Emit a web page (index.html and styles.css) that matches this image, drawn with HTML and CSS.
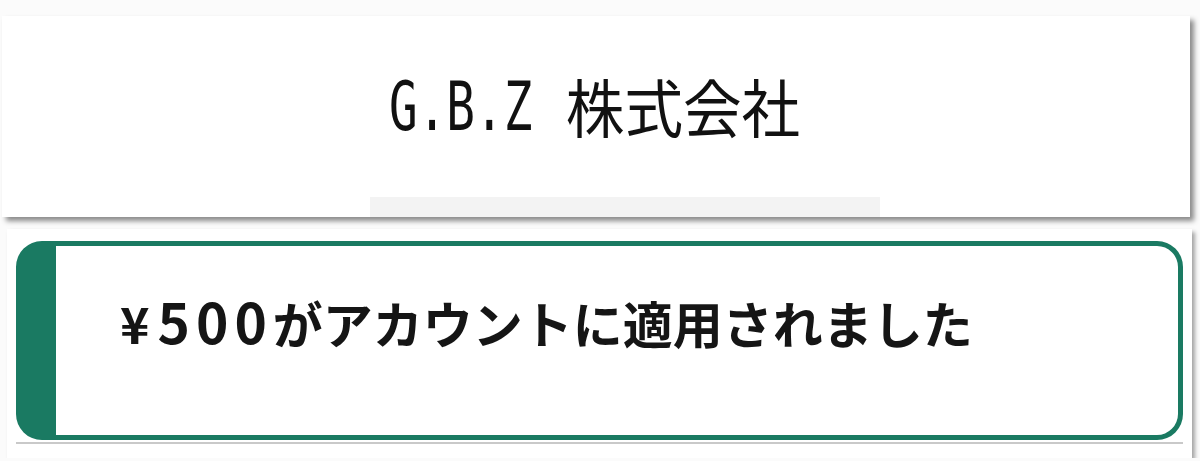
FILE: index.html
```html
<!DOCTYPE html>
<html lang="ja">
<head>
    <meta charset="UTF-8">
    <meta name="viewport" content="width=device-width, initial-scale=1.0">
    <title>G.B.Z 株式会社</title>
    <link rel="stylesheet" href="styles.css">
</head>
<body>
    <div class="header">
        <h1 class="title"><span class="latin">G.B.Z</span><span class="kanji">株式会社</span></h1>
        <div class="header-strip"></div>
    </div>

    <div class="notice-card">
        <div class="notice">
            <p><span class="yen">¥</span><span class="amount">500</span>がアカウントに適用されました</p>
        </div>
        <div class="notice-rule"></div>
    </div>
</body>
</html>
```

FILE: styles.css
```css
body {
    margin: 0;
    background-color: #fbfbfb;
    font-family: "Noto Sans CJK JP", "Noto Sans", sans-serif;
    color: #111;
}

/* top card with the company name */
.header {
    width: 1188px;
    height: 201px;
    margin: 16px 0 0 2px;
    background-color: #fff;
    box-shadow: 4px 4px 5px rgba(0, 0, 0, 0.45);
    display: flex;
    flex-direction: column;
}

.title {
    flex: 1;
    margin: 0;
    display: flex;
    align-items: center;
    justify-content: center;
    font-weight: 400;
    padding-left: 6px;
}

.latin {
    display: inline-block;
    font-family: "DejaVu Sans Mono", monospace;
    font-size: 68px;
    transform: scaleX(0.7);
    transform-origin: left center;
    margin-right: -37px;
}

.kanji {
    display: inline-block;
    font-size: 63px;
    transform: scaleX(0.93);
    margin-top: -4px;
}

.header-strip {
    width: 510px;
    height: 20px;
    margin-left: 368px;
    background-color: #f3f3f3;
}

/* bottom card with the green notice */
.notice-card {
    width: 1185px;
    height: 229px;
    margin: 12px 0 0 7px;
    padding: 12px 9px 0 9px;
    box-sizing: border-box;
    background-color: #fff;
    box-shadow: 3px 3px 4px rgba(0, 0, 0, 0.35);
}

.notice {
    height: 199px;
    box-sizing: border-box;
    border: 5px solid #1a7a62;
    border-left-width: 40px;
    border-radius: 26px;
    padding: 44px 0 0 64px;
}

.notice p {
    margin: 0;
    font-size: 50px;
    font-weight: 700;
    line-height: 60px;
    color: #151515;
}

.yen {
    margin-right: 8px;
}

.amount {
    font-size: 55px;
    letter-spacing: 6px;
}

.notice-rule {
    height: 2px;
    margin-top: 2px;
    background-color: #c9c9c9;
}
```
